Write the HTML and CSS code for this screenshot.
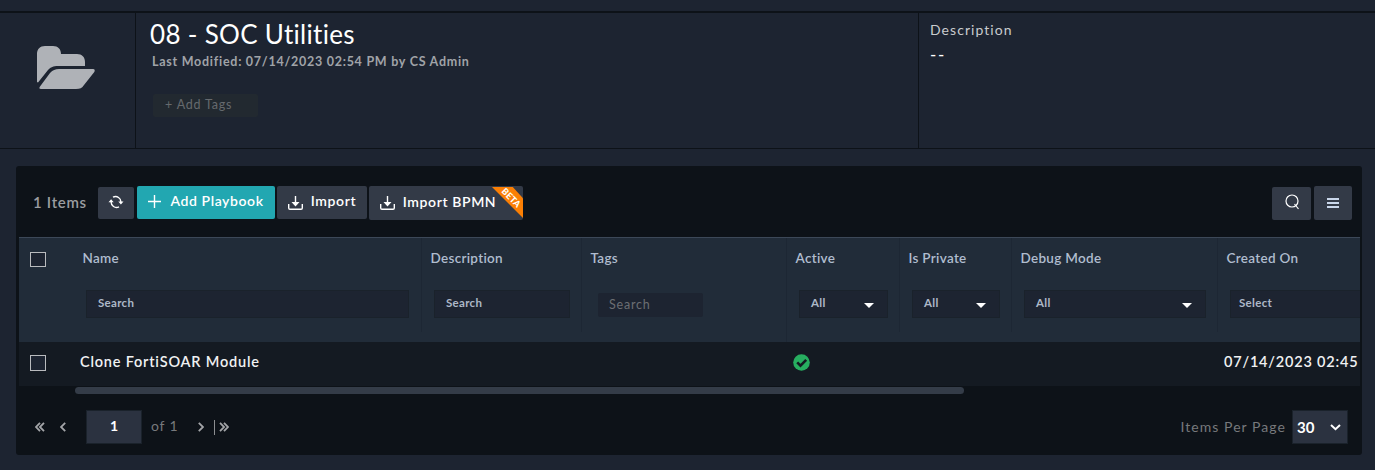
FILE: index.html
```html
<!DOCTYPE html>
<html lang="en">
<head>
<meta charset="utf-8">
<title>08 - SOC Utilities</title>
<link rel="stylesheet" href="styles.css">
</head>
<body>
<header class="collection">
  <div class="collection-icon">
    <svg width="58" height="44" viewBox="0 0 58 44"><path d="M0 36V8C0 3 3 0 8 0h8c5 0 8 3 8 8h16c5 0 8 3 8 8v4H21c-5 0-7 1-10 4L1 36.500Z"/><path d="M22 23h34c2 0 2 1.500 1.300 3L47 39c-2 3-4 4-8 4H4c-2 0-2-1.300-1-2.500L13 27c3-3 5-4 9-4Z"/></svg>
  </div>
  <div class="collection-info">
    <h1 class="title">08 - SOC Utilities</h1>
    <p class="modified">Last Modified: 07/14/2023 02:54 PM by CS Admin</p>
    <div class="add-tags">+ Add Tags</div>
  </div>
  <div class="collection-desc">
    <div class="desc-label">Description</div>
    <div class="desc-value">--</div>
  </div>
</header>
<main class="panel">
  <div class="toolbar">
    <span class="count">1 Items</span>
    <button class="btn refresh"><svg width="16" height="14" viewBox="0 0 16 14"><path d="M5 2.200A5.300 5.300 0 0 1 12.800 7.500M11 11.800A5.300 5.300 0 0 1 3.200 6.500" class="line"/><path d="M10.300 6.500h5.200l-2.600 3ZM.5 7.200h5.200l-2.600-3Z"/></svg></button>
    <button class="btn add"><svg width="13" height="13" viewBox="0 0 13 13"><path class="line" d="M6.500 0v13M0 6.500h13"/></svg><span>Add Playbook</span></button>
    <button class="btn import"><svg width="15" height="14" viewBox="0 0 15 14"><path class="line" d="M.7 8v4q0 1.300 1.300 1.300h11q1.300 0 1.300-1.300V8M7.500 0v9"/><path d="M3.500 6h8l-4 4.500Z"/></svg><span>Import</span></button>
    <button class="btn bpmn"><svg width="15" height="14" viewBox="0 0 15 14"><path class="line" d="M.7 8v4q0 1.300 1.300 1.300h11q1.300 0 1.300-1.300V8M7.500 0v9"/><path d="M3.500 6h8l-4 4.500Z"/></svg><span>Import BPMN</span><span class="beta"><span class="beta-text">BETA</span></span></button>
    <button class="btn find"><svg width="15" height="16" viewBox="0 0 15 16"><circle class="line" cx="7" cy="7" r="6"/><path class="line" d="m9.500 10 4 5"/></svg></button>
    <button class="btn menu"><svg width="12" height="10" viewBox="0 0 12 10"><path d="M0 0h12v2H0ZM0 4h12v2H0ZM0 8h12v2H0Z"/></svg></button>
  </div>
  <section class="table">
    <div class="row head">
      <div class="cell check"><i class="box"></i></div>
      <div class="cell name-col"><span class="label">Name</span><div class="field">Search</div></div>
      <div class="cell"><span class="label">Description</span><div class="field">Search</div></div>
      <div class="cell tall"><span class="label">Tags</span><div class="field tags">Search</div></div>
      <div class="cell"><span class="label">Active</span><div class="field select">All<i class="caret"></i></div></div>
      <div class="cell"><span class="label">Is Private</span><div class="field select">All<i class="caret"></i></div></div>
      <div class="cell"><span class="label">Debug Mode</span><div class="field select">All<i class="caret"></i></div></div>
      <div class="cell last"><span class="label">Created On</span><div class="field">Select</div></div>
    </div>
    <div class="row body">
      <div class="check"><i class="box"></i></div>
      <div class="name">Clone FortiSOAR Module</div>
      <div></div><div></div>
      <div class="active"><svg width="17" height="17" viewBox="0 0 17 17"><circle cx="8.500" cy="8.500" r="8.300"/><path d="m4.200 8.300 3.300 3.400 5.700-5.800"/></svg></div>
      <div></div><div></div>
      <div class="created">07/14/2023 02:45</div>
    </div>
  </section>
  <div class="scrollbar"></div>
  <footer class="pager">
    <svg class="first" width="10" height="10" viewBox="0 0 10 10"><path d="M5 .8.900 5 5 9.200M9 .8 4.900 5 9 9.200"/></svg>
    <svg class="prev" width="6" height="10" viewBox="0 0 6 10"><path d="M5.200.8 1 5l4.200 4.200"/></svg>
    <div class="page">1</div>
    <span class="of">of 1</span>
    <svg class="next" width="6" height="10" viewBox="0 0 6 10"><path d="M.8.800 5 5 .8 9.200"/></svg>
    <i class="bar"></i>
    <svg class="end" width="10" height="10" viewBox="0 0 10 10"><path d="M1 .8 5.100 5 1 9.200M5 .8 9.100 5 5 9.200"/></svg>
    <span class="per">Items Per Page</span>
    <div class="size"><span>30</span><svg width="11" height="7" viewBox="0 0 11 7"><path d="m1 1 4.500 4.200L10 1"/></svg></div>
  </footer>
</main>
</body>
</html>
```
FILE: styles.css
```css
* { box-sizing: border-box; }
body {
  margin: 0;
  height: 470px;
  overflow: hidden;
  background: #1d2431;
  font-family: Lato, sans-serif;
  color: #fff;
}
svg { display: block; flex: none; }

.collection {
  display: grid;
  grid-template-columns: 136px 783px 1fr;
  height: 138px;
  margin-top: 11px;
  border-top: 2px solid #0d1218;
  border-bottom: 1px solid #0d1218;
}
.collection-icon { padding: 33px 0 0 37px; border-right: 1px solid #0d1218; }
.collection-icon svg { fill: #afb2b7; }
.collection-info { padding: 5px 0 0 14px; border-right: 1px solid #0d1218; }
.title { margin: 0; font-size: 26px; font-weight: 400; line-height: 32px; letter-spacing: .3px; }
.modified { margin: 4px 0 0 2px; font-size: 12.5px; font-weight: 700; line-height: 16px; letter-spacing: .74px; color: #a0a3a8; }
.add-tags {
  width: 105px;
  height: 23px;
  margin: 24px 0 0 3px;
  padding-left: 12px;
  border-radius: 2px;
  background: #222930;
  font-size: 12.5px;
  line-height: 22px;
  letter-spacing: .8px;
  color: #666a6e;
}
.collection-desc { padding: 7px 0 0 11px; }
.desc-label { font-size: 14px; line-height: 20px; letter-spacing: 1.05px; color: #c9cbce; }
.desc-value { margin-top: 5px; font-size: 17px; line-height: 20px; letter-spacing: 1.8px; }

.panel {
  width: 1346px;
  height: 289px;
  margin: 17px 0 0 16px;
  padding: 20px 2px 0 3px;
  border-radius: 3px;
  background: #0d1218;
}
.toolbar { display: flex; align-items: flex-start; height: 51px; padding: 0 8px 0 14px; }
.count { width: 65px; font-size: 15px; font-weight: 600; line-height: 32px; letter-spacing: .7px; color: #9b9da0; white-space: nowrap; }
.btn {
  display: flex;
  align-items: center;
  justify-content: center;
  height: 33px;
  padding: 0;
  border: 0;
  border-radius: 2px;
  background: #333a47;
  color: #fff;
  font: 600 14px/20px Lato, sans-serif;
  letter-spacing: .6px;
  white-space: nowrap;
}
.btn svg { fill: #fff; }
.line { fill: none; stroke: #fff; stroke-width: 1.4; }
.refresh { width: 36px; height: 32px; margin-top: 1px; padding-bottom: 2px; }
.add { width: 138px; margin-left: 3px; padding-bottom: 3px; gap: 9px; background: #22a7b1; }
.import { width: 90px; margin-left: 2px; padding-bottom: 3px; gap: 8px; }
.bpmn { position: relative; width: 154px; height: 34px; margin-left: 2px; padding: 0 27px 3px 11px; gap: 8px; overflow: hidden; }
.import svg, .bpmn > svg { margin-top: 3px; }
.beta { position: absolute; top: 1px; right: 0; width: 31px; height: 31px; background: #fb7f04; clip-path: polygon(0 0, 67% 0, 100% 36%, 100% 100%); }
.beta-text { position: absolute; top: 6px; left: 8px; width: 23px; font-size: 9px; font-weight: 900; line-height: 9px; letter-spacing: .2px; transform: rotate(45deg); text-align: center; }
.find { width: 39px; margin: 1px 3px 0 auto; padding: 0 0 3px 1px; }
.menu { width: 38px; height: 34px; padding-bottom: 1px; }
.menu svg { fill: #c9d6ea; }
.find .line { stroke-width: 1.2; }

.table { border-top: 1px solid #3c4858; overflow: hidden; }
.row { display: grid; grid-template-columns: 56px 347px 160px 205px 113px 112px 206px 142px; }
.head { height: 104px; background: #212c39; }
.cell { height: 94px; padding-top: 10px; border-right: 1px solid #1d2734; }
.cell.tall { height: 104px; }
.cell.check, .cell.last { border-right: 0; }
.cell.check { padding: 14px 0 0 11px; }
.box { display: block; width: 16px; height: 16px; border: 1px solid #b9bbbe; background: #1d2431; }
.head .box { height: 15px; }
.label { display: block; margin-left: 8.5px; font-size: 13.5px; font-weight: 600; line-height: 20px; letter-spacing: .3px; color: #b0bdcf; }
.name-col .label { margin-left: 7.500px; }
.field {
  display: flex;
  align-items: center;
  justify-content: space-between;
  height: 28px;
  margin: 22px 11px 0 12px;
  padding: 0 12px 3px 11px;
  border: 1px solid #1a222b;
  background: #1d2431;
  font-size: 11.5px;
  font-weight: 700;
  letter-spacing: .3px;
  color: #adb8c8;
}
.name-col .field { margin-left: 11px; margin-right: 12px; }
.field.tags { width: 105px; height: 24px; margin: 25px 0 0 16px; padding-bottom: 1px; border: 0; border-radius: 2px; font-size: 12.5px; font-weight: 400; letter-spacing: .8px; color: #6c6f73; }
.select { padding-left: 11px; padding-right: 13px; }
.caret { margin-top: 6px; border: 5px solid transparent; border-top-color: #fff; border-bottom: 0; }
.last .field { margin-right: -4px; padding-left: 8px; }
.body { height: 44px; background: #141a22; font-size: 14.5px; font-weight: 600; line-height: 40px; letter-spacing: .8px; color: #f0f1f2; white-space: nowrap; }
.body .check { padding: 13px 0 0 11px; }
.name { padding-left: 5px; }
.active { padding: 12px 0 0 6px; }
.active circle { fill: #27ae60; }
.active path { fill: none; stroke: #141a22; stroke-width: 2.6; }
.created { padding-left: 6px; }

.scrollbar { width: 889px; height: 7px; margin: 1px 0 0 56px; border-radius: 4px; background: #343c48; }

.pager { display: flex; align-items: center; height: 34px; margin-top: 16px; padding: 0 12px 0 16px; }
.pager svg { fill: none; stroke: #a3a5a8; stroke-width: 1.8; }
.prev { margin-left: 15px; }
.page { width: 56px; height: 34px; margin-left: 20px; border: 1px solid #1a222b; background: #2b3240; font-size: 14px; font-weight: 700; line-height: 30px; text-align: center; }
.of { width: 47px; margin: -2px 0 0 9px; font-size: 14px; line-height: 20px; letter-spacing: .8px; color: #77797c; }
.bar { width: 1px; height: 15px; margin-left: 10px; background: #8c8e91; }
.end { margin-left: 4px; }
.per { margin-left: auto; margin-top: -1px; font-size: 14px; letter-spacing: 1.05px; color: #77797c; }
.size { display: flex; align-items: center; justify-content: space-between; width: 56px; height: 34px; margin-left: 6px; padding: 0 6px 0 4px; border: 1px solid #1a222b; background: #2b3240; font-size: 15px; font-weight: 700; }
.size svg { stroke: #fff; stroke-width: 2; }
```
